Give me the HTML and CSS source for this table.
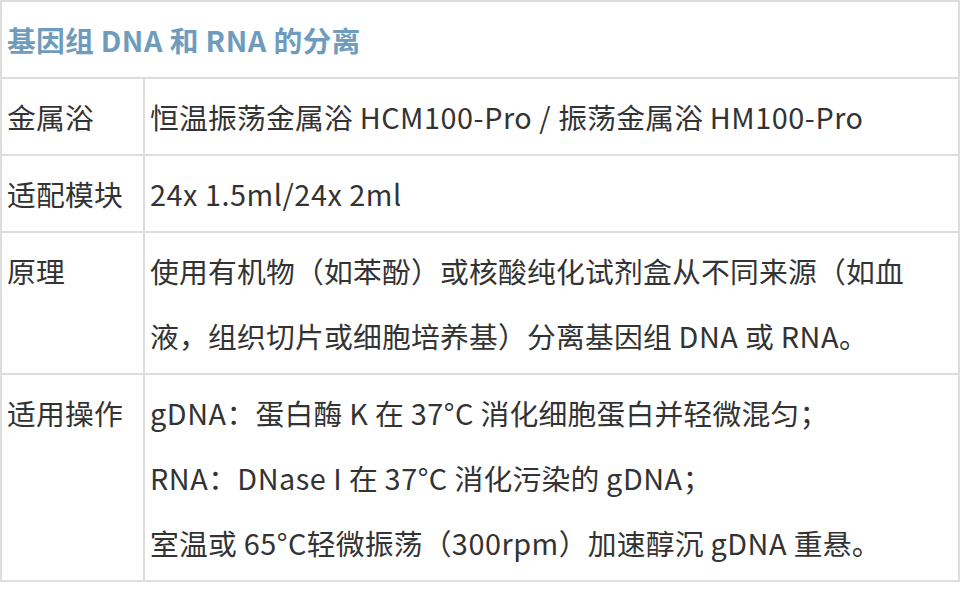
FILE: index.html
```html
<!DOCTYPE html>
<html lang="zh-CN">
<head>
<meta charset="utf-8">
<title>基因组 DNA 和 RNA 的分离</title>
<link rel="stylesheet" href="styles.css">
</head>
<body>
<table class="spec">
  <thead>
    <tr><th class="title" colspan="2">基因组 <span class="en">DNA</span> 和 <span class="en">RNA</span> 的分离</th></tr>
  </thead>
  <tbody>
    <tr><td class="label">金属浴</td><td class="value">恒温振荡金属浴 <span class="en">HCM100-Pro / </span>振荡金属浴 <span class="en">HM100-Pro</span></td></tr>
    <tr><td class="label">适配模块</td><td class="value"><span class="en">24x 1.5ml/24x 2ml</span></td></tr>
    <tr><td class="label">原理</td><td class="value">使用有机物（如苯酚）或核酸纯化试剂盒从不同来源（如血液，组织切片或细胞培养基）分离基因组 <span class="en">DNA</span> 或 <span class="en">RNA</span>。</td></tr>
    <tr><td class="label">适用操作</td><td class="value"><span class="en">gDNA</span>：蛋白酶 <span class="en">K</span> 在 <span class="en">37°C</span> 消化细胞蛋白并轻微混匀；<br><span class="en">RNA</span>：<span class="en">DNase I</span> 在 <span class="en">37°C</span> 消化污染的 <span class="en">gDNA</span>；<br>室温或 <span class="en">65°C</span>轻微振荡（<span class="en">300rpm</span>）加速醇沉 <span class="en">gDNA</span> 重悬。</td></tr>
  </tbody>
</table>
</body>
</html>
```
FILE: styles.css
```css
html, body {
  margin: 0;
  padding: 0;
  background: #ffffff;
}
.spec {
  width: 960px;
  border-collapse: collapse;
  font-family: "Noto Sans CJK SC", "Noto Sans", sans-serif;
  font-size: 28.8px;
  font-weight: 400;
  letter-spacing: 0.2px;
  line-height: 65px;
  color: #333333;
}
.spec th, .spec td {
  border: 2px solid #dddddd;
  padding: 5px 5px;
  text-align: left;
  vertical-align: top;
}
.spec .en {
  letter-spacing: 0.55px;
}
.spec .title {
  font-weight: 700;
  color: #6f9cbd;
}
.spec .label {
  width: 131px;
  white-space: nowrap;
}
```
